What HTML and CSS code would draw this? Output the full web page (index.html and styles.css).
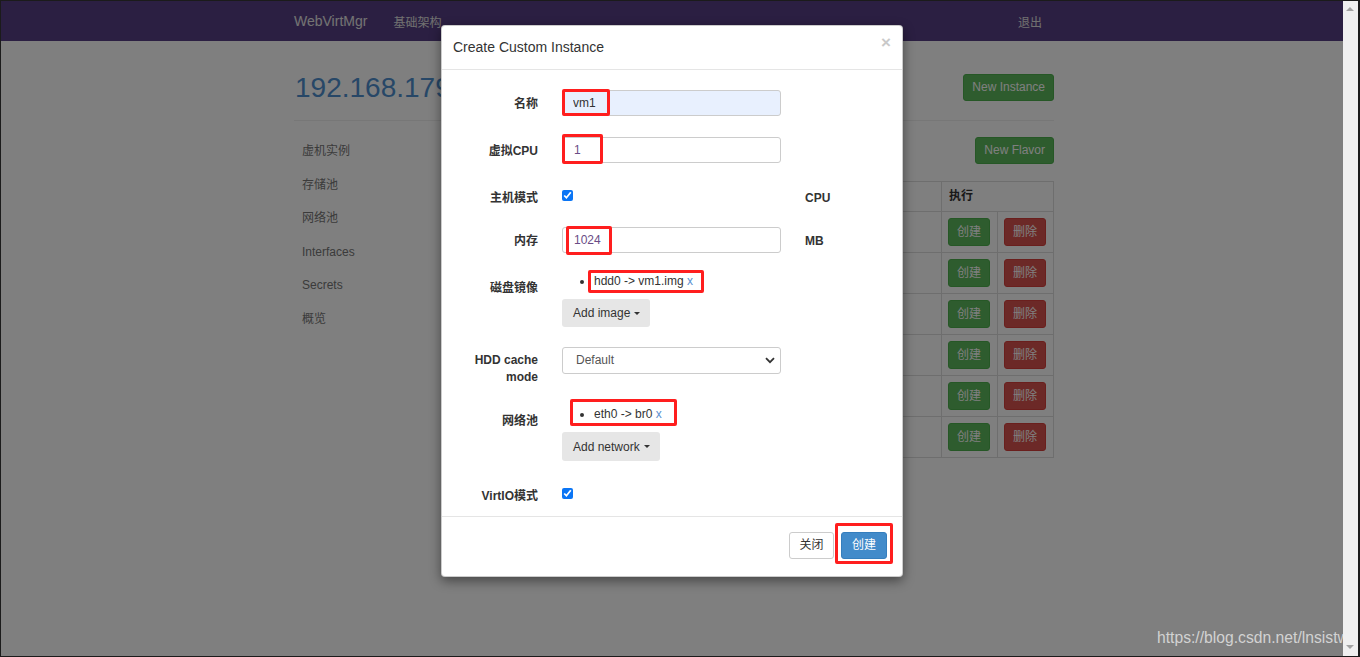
FILE: index.html
```html
<!DOCTYPE html>
<html lang="zh">
<head>
<meta charset="utf-8">
<title>WebVirtMgr</title>
<link rel="stylesheet" href="styles.css">
</head>
<body>
<div class="frame">
  <div class="viewport">
    <nav class="navbar">
      <div class="container nav-inner">
        <span class="brand">WebVirtMgr</span>
        <span class="nav-link">基础架构</span>
        <span class="spacer"></span>
        <span class="nav-link nav-right">退出</span>
      </div>
    </nav>
    <div class="container">
      <div class="page-header">
        <h1>192.168.179</h1>
        <button class="btn btn-success">New Instance</button>
      </div>
      <div class="divider"></div>
      <div class="content">
        <ul class="sidenav">
          <li>虚机实例</li>
          <li>存储池</li>
          <li>网络池</li>
          <li>Interfaces</li>
          <li>Secrets</li>
          <li>概览</li>
        </ul>
        <div class="main">
          <div class="toolbar"><button class="btn btn-success">New Flavor</button></div>
          <table class="flavors">
            <thead>
              <tr><th class="c1"></th><th class="c2"></th><th class="c3"></th><th class="c4"></th><th colspan="2">执行</th></tr>
            </thead>
            <tbody>
              <tr><td></td><td></td><td></td><td></td><td class="act"><button class="btn btn-sm btn-success">创建</button></td><td class="act"><button class="btn btn-sm btn-danger">删除</button></td></tr>
              <tr><td></td><td></td><td></td><td></td><td class="act"><button class="btn btn-sm btn-success">创建</button></td><td class="act"><button class="btn btn-sm btn-danger">删除</button></td></tr>
              <tr><td></td><td></td><td></td><td></td><td class="act"><button class="btn btn-sm btn-success">创建</button></td><td class="act"><button class="btn btn-sm btn-danger">删除</button></td></tr>
              <tr><td></td><td></td><td></td><td></td><td class="act"><button class="btn btn-sm btn-success">创建</button></td><td class="act"><button class="btn btn-sm btn-danger">删除</button></td></tr>
              <tr><td></td><td></td><td></td><td></td><td class="act"><button class="btn btn-sm btn-success">创建</button></td><td class="act"><button class="btn btn-sm btn-danger">删除</button></td></tr>
              <tr><td></td><td></td><td></td><td></td><td class="act"><button class="btn btn-sm btn-success">创建</button></td><td class="act"><button class="btn btn-sm btn-danger">删除</button></td></tr>
            </tbody>
          </table>
        </div>
      </div>
    </div>

    <div class="backdrop"></div>
    <div class="watermark">https://blog.csdn.net/lnsistw</div>

    <div class="modal">
      <div class="modal-header">
        <h4>Create Custom Instance</h4>
        <span class="close">×</span>
      </div>
      <div class="modal-body">
        <div class="form-row">
          <label class="lbl">名称</label>
          <div class="ctrl"><input class="field autofill" type="text" value="vm1" readonly></div>
        </div>
        <div class="form-row">
          <label class="lbl">虚拟CPU</label>
          <div class="ctrl"><input class="field num" type="text" value="1" readonly></div>
        </div>
        <div class="form-row short">
          <label class="lbl">主机模式</label>
          <div class="ctrl"><input class="check" type="checkbox" checked></div>
          <span class="unit">CPU</span>
        </div>
        <div class="form-row">
          <label class="lbl">内存</label>
          <div class="ctrl"><input class="field num" type="text" value="1024" readonly></div>
          <span class="unit">MB</span>
        </div>
        <div class="form-row tight">
          <label class="lbl">磁盘镜像</label>
          <div class="ctrl">
            <ul class="items"><li>hdd0 -&gt; vm1.img <a class="rm">x</a></li></ul>
            <button class="btn-add">Add image<span class="caret"></span></button>
          </div>
        </div>
        <div class="form-row">
          <label class="lbl two">HDD cache mode</label>
          <div class="ctrl">
            <div class="select-wrap">
              <div class="select">Default</div>
              <svg class="chev" width="10" height="7" viewBox="0 0 10 7"><path d="M1 1.2 L5 5.2 L9 1.2" fill="none" stroke="#333" stroke-width="1.8"/></svg>
            </div>
          </div>
        </div>
        <div class="form-row">
          <label class="lbl">网络池</label>
          <div class="ctrl">
            <ul class="items"><li>eth0 -&gt; br0 <a class="rm">x</a></li></ul>
            <button class="btn-add net">Add network<span class="caret"></span></button>
          </div>
        </div>
        <div class="form-row short last">
          <label class="lbl">VirtIO模式</label>
          <div class="ctrl"><input class="check" type="checkbox" checked></div>
        </div>
      </div>
      <div class="modal-footer">
        <button class="btn btn-default">关闭</button>
        <button class="btn btn-primary">创建</button>
      </div>

      <span class="mark mark-name"></span>
      <span class="mark mark-cpu"></span>
      <span class="mark mark-mem"></span>
      <span class="mark mark-hdd"></span>
      <span class="mark mark-eth"></span>
      <span class="mark mark-create"></span>
    </div>
  </div>
  <div class="scrollbar">
    <span class="arrow-up"></span>
    <span class="arrow-down"></span>
  </div>
</div>
</body>
</html>
```
FILE: styles.css
```css
* { box-sizing: border-box; }

html, body {
  margin: 0;
  padding: 0;
  background: #1b1b1b;
}

body {
  font-family: "Liberation Sans", Arial, "Noto Sans CJK SC", sans-serif;
  font-size: 12px;
  color: #333;
}

.frame {
  width: 1360px;
  height: 657px;
  border: 1px solid #1b1b1b;
  border-right-width: 2px;
  display: flex;
  background: #1b1b1b;
}

.viewport {
  position: relative;
  flex: 1;
  height: 100%;
  overflow: hidden;
  background: #fff;
}

.scrollbar {
  position: relative;
  width: 15px;
  height: 100%;
  background: #f0f0f0;
}

.arrow-up, .arrow-down {
  position: absolute;
  left: 3px;
  width: 0;
  height: 0;
  border-left: 4px solid transparent;
  border-right: 4px solid transparent;
}

.arrow-up {
  top: 6px;
  border-bottom: 4px solid #a3a3a3;
}

.arrow-down {
  bottom: 7px;
  border-top: 4px solid #a3a3a3;
}

/* page behind the modal */
.container {
  width: 764px;
  margin: 0 auto;
  padding-left: 4px;
}

.navbar {
  height: 40px;
  background: #573f84;
}

.nav-inner {
  display: flex;
  align-items: center;
  height: 40px;
}

.brand {
  font-size: 14px;
  color: #e6e6e6;
  margin-right: 26px;
}

.nav-link {
  font-size: 12px;
  color: #e0e0e0;
}

.spacer { flex: 1; }

.nav-right { margin-right: 12px; }

.page-header {
  display: flex;
  justify-content: space-between;
  align-items: center;
  margin-top: 31px;
  height: 31px;
}

.page-header h1 {
  margin: 0;
  font-size: 28px;
  font-weight: normal;
  line-height: 31px;
  color: #4f8fcf;
  padding-left: 1px;
  white-space: nowrap;
}

.divider {
  margin-top: 17px;
  border-top: 1px solid #eee;
}

.content {
  display: flex;
}

.sidenav {
  list-style: none;
  margin: 0;
  padding: 14px 0 0;
  width: 150px;
  flex-shrink: 0;
}

.sidenav li {
  padding: 8px 8px;
  line-height: 17.6px;
  font-size: 12px;
  color: #767676;
}

.main {
  flex: 1;
}

.toolbar {
  display: flex;
  justify-content: flex-end;
  margin-top: 16px;
}

.btn {
  font-family: inherit;
  font-size: 12px;
  height: 27px;
  padding: 0 8px;
  border: 1px solid transparent;
  border-radius: 3px;
  line-height: 25px;
  cursor: pointer;
}

.btn-success {
  background: #5cb85c;
  border-color: #4cae4c;
  color: #fff;
}

.btn-danger {
  background: #d9534f;
  border-color: #d43f3a;
  color: #fff;
}

.btn-sm {
  width: 42px;
  height: 28px;
  padding: 0;
  line-height: 26px;
}

.flavors {
  margin-top: 17px;
  width: 100%;
  border-collapse: collapse;
  border: 1px solid #ddd;
}

.flavors th, .flavors td {
  border: 1px solid #ddd;
  text-align: left;
  font-size: 12px;
}

.flavors th {
  padding: 7px 7px;
  line-height: 15px;
  font-weight: bold;
  color: #333;
}

.flavors td {
  padding: 6px 6px;
  height: 41px;
  color: #333;
}

.flavors .c1 { width: 116px; }
.flavors .c2 { width: 120px; }
.flavors .c3 { width: 120px; }
.flavors .c4 { width: 141px; }
.flavors td.act { width: 56px; }

.backdrop {
  position: absolute;
  inset: 0;
  background: rgba(0, 0, 0, 0.5);
  z-index: 10;
}

.watermark {
  position: absolute;
  left: 1156px;
  top: 628px;
  font-size: 15.7px;
  line-height: 18px;
  white-space: nowrap;
  color: #d2d2d2;
  z-index: 30;
}

/* modal */
.modal {
  position: absolute;
  left: 440px;
  top: 24px;
  width: 462px;
  background: #fff;
  border: 1px solid rgba(0, 0, 0, 0.2);
  border-radius: 4px;
  box-shadow: 0 4px 12px rgba(0, 0, 0, 0.45);
  z-index: 20;
}

.modal-header {
  display: flex;
  justify-content: space-between;
  align-items: center;
  height: 44px;
  padding: 0 11px 1px 11px;
  border-bottom: 1px solid #e5e5e5;
}

.modal-header h4 {
  margin: 0;
  font-size: 14px;
  font-weight: normal;
  color: #333;
}

.close {
  align-self: flex-start;
  margin-top: 8px;
  font-size: 17px;
  font-weight: bold;
  line-height: 18px;
  color: #c9c9c9;
}

.modal-body {
  padding: 20px 12px 12px;
}

.form-row {
  display: flex;
  align-items: flex-start;
  margin-bottom: 21px;
}

.form-row.tight { margin-bottom: 20px; }
.form-row.last { margin-bottom: 0; }
.form-row.short { height: 22px; }

.lbl {
  width: 96px;
  flex-shrink: 0;
  padding: 6px 12px 0 0;
  text-align: right;
  font-weight: bold;
  font-size: 12px;
  line-height: 17px;
  color: #333;
}

.lbl.two { padding-top: 5px; }

.ctrl {
  width: 219px;
  margin-left: 12px;
  flex-shrink: 0;
}

.unit {
  margin-left: 24px;
  padding-top: 6px;
  font-weight: bold;
  line-height: 17px;
  color: #333;
}

.field {
  display: block;
  width: 100%;
  height: 26px;
  padding: 0 10px;
  border: 1px solid #ccc;
  border-radius: 3px;
  font-family: inherit;
  font-size: 12px;
  color: #333;
  background: #fff;
  outline: none;
}

.field.autofill { background: #e8f0fe; }
.field.num { color: #6a4c86; padding-left: 11px; }

.check {
  display: block;
  width: 11px;
  height: 11px;
  margin: 6px 0 0;
  accent-color: #0a75f5;
}

.items {
  margin: 0;
  padding-left: 32px;
  list-style: disc;
  line-height: 15px;
  font-size: 12px;
  color: #333;
}

.rm { color: #5b8fd0; }

.btn-add {
  display: flex;
  align-items: center;
  margin-top: 10px;
  height: 28px;
  padding: 0 10px 0 11px;
  border: none;
  border-radius: 3px;
  background: #e6e6e6;
  font-family: inherit;
  font-size: 12px;
  color: #333;
}

.btn-add.net { height: 29px; }

.caret {
  display: inline-block;
  width: 0;
  height: 0;
  margin-left: 4px;
  border-left: 3px solid transparent;
  border-right: 3px solid transparent;
  border-top: 3px solid #333;
}

.select-wrap {
  position: relative;
}

.select {
  height: 27px;
  padding: 0 13px;
  border: 1px solid #ccc;
  border-radius: 3px;
  line-height: 25px;
  color: #555;
  font-size: 12px;
}

.chev {
  position: absolute;
  right: 6px;
  top: 10px;
}

.modal-footer {
  display: flex;
  justify-content: flex-end;
  gap: 7px;
  padding: 15px 15px 17px;
  border-top: 1px solid #e5e5e5;
}

.btn-default {
  background: #fff;
  border-color: #ccc;
  color: #333;
  width: 45px;
  padding: 0;
}

.btn-primary {
  background: #428bca;
  border-color: #357ebd;
  color: #fff;
  width: 46px;
  padding: 0;
}

/* red annotation boxes */
.mark {
  position: absolute;
  border: 3px solid #ff1e1e;
  border-radius: 2px;
  pointer-events: none;
}

.mark-name { left: 120px; top: 63px; width: 48px; height: 27px; }
.mark-cpu { left: 120px; top: 108px; width: 41px; height: 30px; }
.mark-mem { left: 124px; top: 200px; width: 46px; height: 29px; }
.mark-hdd { left: 146px; top: 244px; width: 116px; height: 23px; }
.mark-eth { left: 128px; top: 373px; width: 107px; height: 27px; }
.mark-create { left: 393px; top: 497px; width: 58px; height: 41px; }
```
